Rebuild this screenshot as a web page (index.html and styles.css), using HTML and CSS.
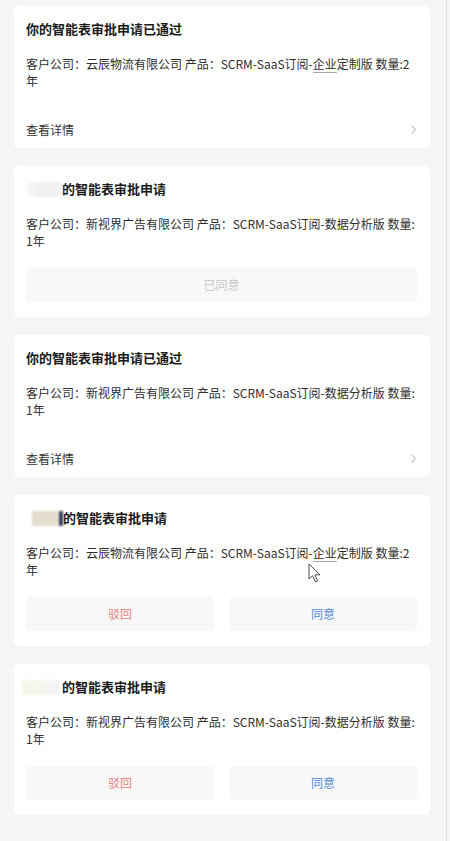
FILE: index.html
```html
<!DOCTYPE html>
<html lang="zh-CN">
<head>
<meta charset="utf-8">
<title>审批</title>
<link rel="stylesheet" href="styles.css">
</head>
<body>
<div class="page">
  <div class="list">
    <div class="card card-link">
      <div class="title">你的智能表审批申请已通过</div>
      <div class="desc">客户公司：云辰物流有限公司 产品：SCRM-SaaS订阅-<span class="ul">企业</span>定制版 数量:2<wbr>年</div>
      <div class="footer">
        <span>查看详情</span>
        <svg class="chev" width="7" height="11" viewBox="0 0 7 11"><polyline points="1.5,1.5 5.5,5.5 1.5,9.5" fill="none" stroke="#c9c9c9" stroke-width="1.2"/></svg>
      </div>
    </div>

    <div class="card card-act">
      <div class="title"><span class="name name-a"></span>的智能表审批申请</div>
      <div class="desc">客户公司：新视界广告有限公司 产品：SCRM-SaaS订阅-数据分析版 数量:<wbr>1年</div>
      <div class="actions">
        <div class="btn btn-done">已同意</div>
      </div>
    </div>

    <div class="card card-link">
      <div class="title">你的智能表审批申请已通过</div>
      <div class="desc">客户公司：新视界广告有限公司 产品：SCRM-SaaS订阅-数据分析版 数量:<wbr>1年</div>
      <div class="footer">
        <span>查看详情</span>
        <svg class="chev" width="7" height="11" viewBox="0 0 7 11"><polyline points="1.5,1.5 5.5,5.5 1.5,9.5" fill="none" stroke="#c9c9c9" stroke-width="1.2"/></svg>
      </div>
    </div>

    <div class="card card-act cursor-host">
      <div class="title"><span class="name name-b"><span class="bar"></span></span>的智能表审批申请</div>
      <div class="desc">客户公司：云辰物流有限公司 产品：SCRM-SaaS订阅-<span class="ul">企业</span>定制版 数量:2<wbr>年</div>
      <div class="actions">
        <div class="btn btn-reject">驳回</div>
        <div class="btn btn-agree">同意</div>
      </div>
      <svg class="cursor" width="14" height="21" viewBox="0 0 14 21"><path d="M1 1 L1 16 L4.6 12.6 L7.4 19 L9.6 18 L6.9 11.8 L12 11.8 Z" fill="#fff" stroke="#4a4f57" stroke-width="1" stroke-linejoin="round"/></svg>
    </div>

    <div class="card card-act">
      <div class="title"><span class="name name-c"></span>的智能表审批申请</div>
      <div class="desc">客户公司：新视界广告有限公司 产品：SCRM-SaaS订阅-数据分析版 数量:<wbr>1年</div>
      <div class="actions">
        <div class="btn btn-reject">驳回</div>
        <div class="btn btn-agree">同意</div>
      </div>
    </div>
  </div>
</div>
</body>
</html>
```

FILE: styles.css
```css
html, body {
  margin: 0;
  padding: 0;
  background: #f5f5f5;
}

body {
  font-family: "Noto Sans CJK SC", "Noto Sans", sans-serif;
  color: #333;
}

.page {
  width: 447px;
  min-height: 841px;
  box-sizing: border-box;
  border-right: 1px solid #dcdcdc;
  padding: 6px 0 0 14px;
}

.list {
  width: 416px;
  display: flex;
  flex-direction: column;
  gap: 18px;
}

.card {
  background: #fff;
  border-radius: 5px;
  padding: 14px 13px 15px 12px;
  box-sizing: border-box;
}

.card-link {
  padding-bottom: 9px;
}

.cursor-host {
  position: relative;
}

.title {
  font-size: 13px;
  font-weight: 700;
  line-height: 18px;
  color: #1a1a1a;
  display: flex;
  align-items: center;
}

.name {
  display: inline-block;
  width: 36px;
  height: 15px;
  filter: blur(1.2px);
}

.name-a {
  background: linear-gradient(90deg, #fafafa 0%, #efefef 40%, #f3f3f3 100%);
}

.name-b {
  position: relative;
  width: 26px;
  margin: 0 5px 0 6px;
  background: #e4dccd;
}

.name-b .bar {
  position: absolute;
  right: -5px;
  top: 0;
  width: 4px;
  height: 15px;
  background: #2c3a54;
  border-radius: 1px;
}

.name-c {
  width: 38px;
  margin-left: -4px;
  margin-right: 2px;
  background: linear-gradient(90deg, #f6f7e6 0%, #f4f4f6 100%);
}

.desc {
  margin-top: 17px;
  font-size: 12px;
  line-height: 17px;
  color: #2e2e2e;
}

.ul {
  text-decoration: underline;
  text-decoration-color: #a8a8a8;
  text-underline-offset: 3px;
}

.footer {
  margin-top: 30px;
  height: 20px;
  display: flex;
  align-items: center;
  justify-content: space-between;
  font-size: 12px;
  color: #333;
}

.actions {
  margin-top: 19px;
  display: flex;
  gap: 15px;
}

.btn {
  flex: 1;
  height: 34px;
  line-height: 34px;
  text-align: center;
  font-size: 12px;
  background: #f8f8f8;
  border-radius: 4px;
}

.btn-done {
  color: #c6c6c6;
}

.btn-reject {
  color: #e58383;
}

.btn-agree {
  color: #5088d4;
}

.cursor {
  position: absolute;
  left: 294px;
  top: 68px;
}
```
